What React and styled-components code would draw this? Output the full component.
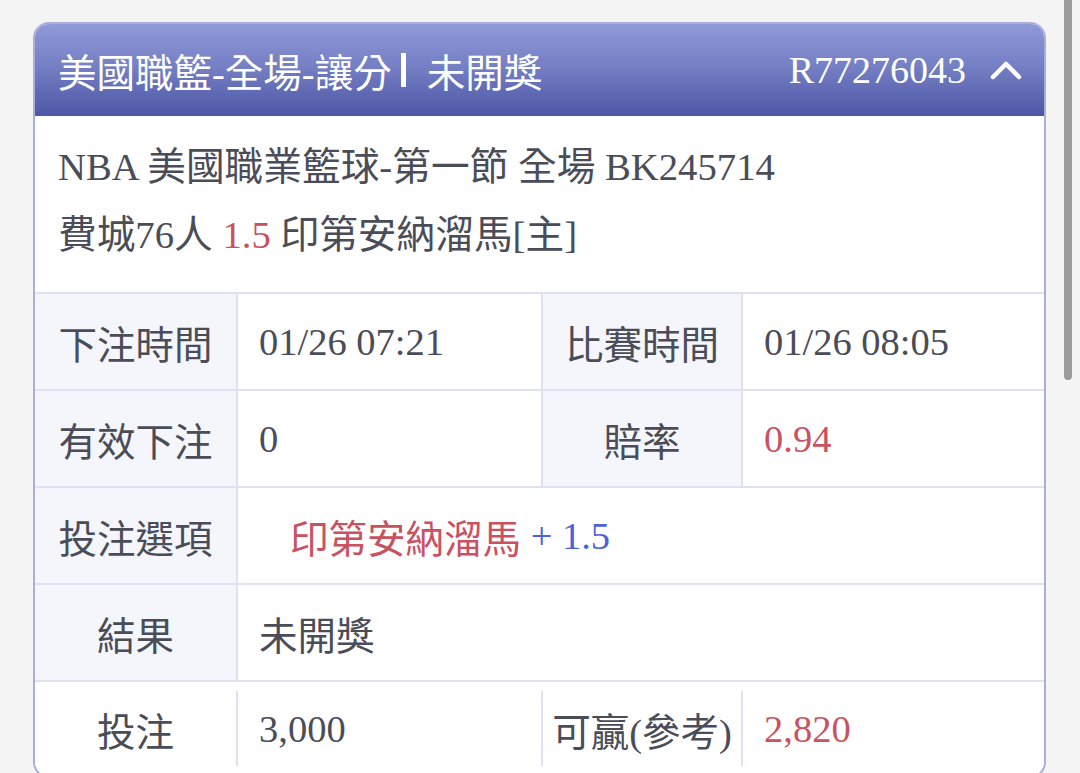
import React from "react";
import styled, { createGlobalStyle } from "styled-components";

const Global = createGlobalStyle`
  html, body { margin: 0; padding: 0; background: #f4f4f4; }
  body { font-family: "Liberation Serif", "Noto Sans CJK TC", serif; }
  * { box-sizing: border-box; }
`;

const Page = styled.div`
  position: relative;
  padding: 22px 34px 0 33px;
  height: 773px;
  overflow: hidden;
`;

const Scrollbar = styled.div`
  position: absolute;
  top: -6px;
  right: 8px;
  width: 8px;
  height: 386px;
  border-radius: 4px;
  background: #9b9b9b;
`;

const Card = styled.div`
  background: #fff;
  border: 2px solid #a9afdb;
  border-radius: 16px;
  overflow: hidden;
  color: #4a4d58;
`;

const Header = styled.div`
  display: flex;
  align-items: center;
  justify-content: space-between;
  height: 92px;
  padding: 0 22px 0 23px;
  background: linear-gradient(180deg, #9099d7 0%, #7580c5 45%, #4d57a5 100%);
  color: #fff;
  font-size: 38.5px;
`;

const Title = styled.div`
  display: flex;
  align-items: center;
  white-space: nowrap;
`;

const Bar = styled.span`
  display: inline-block;
  width: 5px;
  height: 34px;
  background: #fff;
  margin: 0 21px 0 9px;
`;

const HeaderRight = styled.div`
  display: flex;
  align-items: center;
  gap: 24px;
  font-size: 38px;
`;

const Info = styled.div`
  padding: 17px 23px 23px;
  font-size: 38.7px;
  line-height: 68px;
`;

const Line = styled.div`
  white-space: nowrap;
`;

const Red = styled.span`
  color: #c8525f;
`;

const Blue = styled.span`
  color: #4b62d8;
`;

const Table = styled.div`
  border-top: 2px solid #dfe1f2;
  font-size: 38.5px;
`;

const Row = styled.div`
  display: grid;
  grid-template-columns: 203px 305px 200px 1fr;
  height: 97px;
  border-bottom: 2px solid #dfe1f2;
`;

const LastRow = styled.div`
  display: grid;
  grid-template-columns: 203px 305px 200px 1fr;
  padding: 9px 0 10px;
`;

const Cell = styled.div`
  display: flex;
  align-items: center;
  white-space: nowrap;
  grid-column: ${(p) => p.$span || "auto"};
  justify-content: ${(p) => (p.$label ? "center" : "flex-start")};
  padding-left: ${(p) => (p.$label ? "0" : p.$indent ? "52px" : "21px")};
  background: ${(p) => (p.$label && !p.$plain ? "#f5f6fc" : "#fff")};
  border-right: ${(p) => (p.$last ? "none" : "2px solid #dfe1f2")};
  height: ${(p) => (p.$short ? "75px" : "auto")};
`;

const Chevron = () => (
  <svg width="32" height="20" viewBox="0 0 32 20" fill="none">
    <polyline
      points="3,17 16,4 29,17"
      stroke="#fff"
      strokeWidth="4.5"
      strokeLinecap="round"
      strokeLinejoin="round"
    />
  </svg>
);

export default function App() {
  return (
    <>
      <Global />
      <Page>
        <Card>
          <Header>
            <Title>
              美國職籃-全場-讓分
              <Bar />
              未開獎
            </Title>
            <HeaderRight>
              R77276043
              <Chevron />
            </HeaderRight>
          </Header>
          <Info>
            <Line>NBA 美國職業籃球-第一節 全場 BK245714</Line>
            <Line>
              費城76人 <Red>1.5</Red> 印第安納溜馬[主]
            </Line>
          </Info>
          <Table>
            <Row>
              <Cell $label>下注時間</Cell>
              <Cell>01/26 07:21</Cell>
              <Cell $label>比賽時間</Cell>
              <Cell $last>01/26 08:05</Cell>
            </Row>
            <Row>
              <Cell $label>有效下注</Cell>
              <Cell>0</Cell>
              <Cell $label>賠率</Cell>
              <Cell $last>
                <Red>0.94</Red>
              </Cell>
            </Row>
            <Row>
              <Cell $label>投注選項</Cell>
              <Cell $span="2 / 5" $indent $last>
                <Red>印第安納溜馬</Red>&nbsp;<Blue>+ 1.5</Blue>
              </Cell>
            </Row>
            <Row>
              <Cell $label>結果</Cell>
              <Cell $span="2 / 5" $last>
                未開獎
              </Cell>
            </Row>
            <LastRow>
              <Cell $label $plain $short>
                投注
              </Cell>
              <Cell $short>3,000</Cell>
              <Cell $label $plain $short>
                可贏(參考)
              </Cell>
              <Cell $short $last>
                <Red>2,820</Red>
              </Cell>
            </LastRow>
          </Table>
        </Card>
        <Scrollbar />
      </Page>
    </>
  );
}
